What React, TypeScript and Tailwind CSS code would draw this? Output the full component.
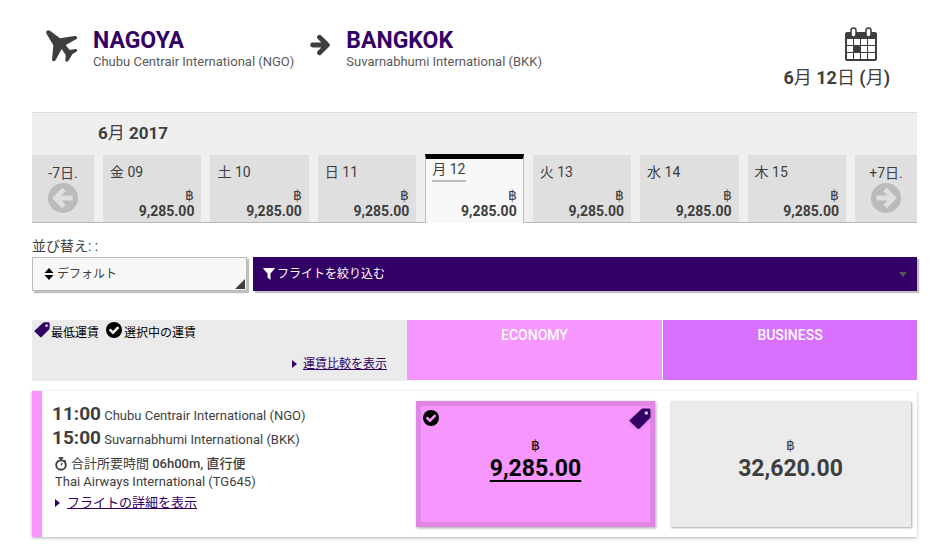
import React, { useState } from 'react';

interface Day {
  weekday: string;
  date: string;
  price: string;
}

const DAYS: Day[] = [
  { weekday: '金', date: '09', price: '9,285.00' },
  { weekday: '土', date: '10', price: '9,285.00' },
  { weekday: '日', date: '11', price: '9,285.00' },
  { weekday: '月', date: '12', price: '9,285.00' },
  { weekday: '火', date: '13', price: '9,285.00' },
  { weekday: '水', date: '14', price: '9,285.00' },
  { weekday: '木', date: '15', price: '9,285.00' },
];

function PlaneIcon() {
  return (
    <svg viewBox="48 44 96 96" className="h-8 w-8 shrink-0" fill="#3e3e3e" aria-hidden="true">
      <path d="M50 47Q54 42 61 47L90 69L134 62Q143 61 141 70L107 89L119 104L136 101Q143 101 141 108L127 117L115 137Q109 142 106 137L107 119L95 101L77 134Q71 141 66 135L70 90L50 56Q47 51 50 47Z" />
    </svg>
  );
}

function ArrowIcon() {
  return (
    <svg viewBox="0 0 20 22" className="h-[22px] w-5 shrink-0" fill="none" stroke="#3e3e3e" strokeWidth="4.8" aria-hidden="true">
      <path d="M2.6 11H16M9.5 3.2L17.3 11L9.5 18.8" strokeLinecap="round" strokeLinejoin="round" />
    </svg>
  );
}

function CalendarIcon() {
  return (
    <svg viewBox="0 0 32 34" className="h-[34px] w-8" aria-hidden="true">
      <rect x="0" y="5" width="32" height="29" rx="2" fill="#3e3e3e" />
      <rect x="2" y="12" width="28" height="20" fill="#fff" />
      <path d="M8.5 12V32M15.5 12V32M22.5 12V32M2 18.5H30M2 25.5H30" stroke="#3e3e3e" strokeWidth="1" />
      <rect x="8.5" y="18.5" width="7" height="7" fill="#3e3e3e" />
      <rect x="6" y="1" width="5" height="9" rx="2.5" fill="#fff" stroke="#3e3e3e" strokeWidth="1.5" />
      <rect x="21" y="1" width="5" height="9" rx="2.5" fill="#fff" stroke="#3e3e3e" strokeWidth="1.5" />
    </svg>
  );
}

function CircleArrowIcon({ left }: { left?: boolean }) {
  return (
    <svg viewBox="0 0 30 30" className="h-[30px] w-[30px]" aria-hidden="true">
      <circle cx="15" cy="15" r="15" fill="#bbb" />
      <g transform={left ? 'rotate(180 15 15)' : undefined}>
        <path d="M5.5 15H22M14 6.5L22.5 15L14 23.5" fill="none" stroke="#dfdfdf" strokeWidth="4.8" />
      </g>
    </svg>
  );
}

function TagIcon({ className }: { className?: string }) {
  return (
    <svg viewBox="0 0 22 22" className={className} aria-hidden="true">
      <path d="M12.5 1Q13 0.5 14 0.5H20Q21.5 0.5 21.5 2V8.5Q21.5 9.5 21 10L10.5 20.6Q9.5 21.5 8.5 20.6L1 13.5Q0 12.5 1 11.7Z" fill="#330066" />
      <circle cx="17.3" cy="5" r="1.8" fill="#dcc8ea" />
    </svg>
  );
}

function CheckIcon({ mark }: { mark: string }) {
  return (
    <svg viewBox="0 0 16 16" className="h-4 w-4 shrink-0" aria-hidden="true">
      <circle cx="8" cy="8" r="8" fill="#000" />
      <path d="M3.6 7.3L7 10.7L12.5 5.2" fill="none" stroke={mark} strokeWidth="2.6" />
    </svg>
  );
}

function StopwatchIcon() {
  return (
    <svg viewBox="0 0 12 14" className="h-[14px] w-3 shrink-0" fill="none" stroke="#3e3e3e" aria-hidden="true">
      <circle cx="6" cy="8" r="4.8" strokeWidth="1.9" />
      <path d="M3.8 0.9H8.2M6 1V3M9.6 3.2L10.8 4.4" strokeWidth="1.6" />
      <path d="M6 8.5L7.2 5.8" strokeWidth="1.2" />
    </svg>
  );
}

function Caret() {
  return (
    <svg viewBox="0 0 5 8" className="h-2 w-[5px] shrink-0" fill="#330066" aria-hidden="true">
      <path d="M0 0L5 4L0 8Z" />
    </svg>
  );
}

function City({ name, airport }: { name: string; airport: string }) {
  return (
    <div>
      <h2 className="text-[23px] leading-7 font-bold text-[#330066]">{name}</h2>
      <p className="text-[13px] leading-[14px] text-[#5a5a5a]">{airport}</p>
    </div>
  );
}

function RouteHeader() {
  return (
    <header className="flex items-start justify-between pl-[14px] pr-[27px]">
      <div className="flex items-start">
        <div className="mt-[3px] mr-[15px]">
          <PlaneIcon />
        </div>
        <City name="NAGOYA" airport="Chubu Centrair International (NGO)" />
        <div className="mx-4 mt-[7px]">
          <ArrowIcon />
        </div>
        <City name="BANGKOK" airport="Suvarnabhumi International (BKK)" />
      </div>
      <div className="flex flex-col items-end">
        <div className="mr-[13px]">
          <CalendarIcon />
        </div>
        <p className="mt-[5px] text-[18px] leading-6 font-bold">
          6<span className="font-normal">月</span> 12<span className="font-normal">日</span> (<span className="font-normal">月</span>)
        </p>
      </div>
    </header>
  );
}

function Baht() {
  return <span className="font-['Liberation_Sans',sans-serif] text-[14px] leading-4">฿</span>;
}

function WeekButton({ label, left }: { label: string; left?: boolean }) {
  return (
    <button className="flex w-[62px] shrink-0 flex-col items-center justify-start bg-[#dfdfdf] pt-2 text-[14px] leading-5">
      {label}
      <CircleArrowIcon left={left} />
    </button>
  );
}

function DayButton({ day, selected, onSelect }: { day: Day; selected: boolean; onSelect: () => void }) {
  return (
    <button
      onClick={onSelect}
      aria-pressed={selected}
      className={
        selected
          ? '-mt-px -mb-px flex flex-1 flex-col border-x border-t-[5px] border-x-[#bbb] border-t-black bg-[#f8f8f8] px-[6px] pb-1 text-[14px]'
          : 'flex flex-1 flex-col bg-[#dfdfdf] px-[7px] pt-2 pb-[3px] text-[14px]'
      }
    >
      <span className={selected ? 'self-start border-b-2 border-[#bbb] leading-[21px]' : 'self-start leading-[18px]'}>
        {day.weekday} {day.date}
      </span>
      <span className="mt-auto flex flex-col self-end text-right leading-4">
        <Baht />
        <span className="font-bold">{day.price}</span>
      </span>
    </button>
  );
}

function Calendar() {
  const [selected, setSelected] = useState('12');
  return (
    <section className="mt-[22px] border-t border-[#ddd] bg-[#efefef]">
      <h3 className="pb-[2px] pl-[66px] text-[17px] leading-10 font-bold">
        6<span className="font-normal">月</span> 2017
      </h3>
      <div className="flex h-[68px] gap-[9px] border-b border-[#b9b9b9]">
        <WeekButton label="-7日." left />
        {DAYS.map(day => (
          <DayButton
            key={day.date}
            day={day}
            selected={day.date === selected}
            onSelect={() => setSelected(day.date)}
          />
        ))}
        <WeekButton label="+7日." />
      </div>
    </section>
  );
}

function Toolbar() {
  return (
    <section className="mt-[13px]">
      <label htmlFor="sort" className="block pb-px text-[14px] leading-5">
        並び替え: :
      </label>
      <div className="flex gap-[6px]">
        <div className="relative w-[215px] shrink-0">
          <select
            id="sort"
            className="h-[34px] w-full appearance-none border border-[#bbb] bg-[#f8f8f8] pl-6 text-[12px] shadow-[2px_2px_1px_#c0c0c0]"
          >
            <option>デフォルト</option>
          </select>
          <svg viewBox="0 0 10 12" className="pointer-events-none absolute top-[11px] left-3 h-3 w-[10px]" aria-hidden="true">
            <path d="M5 0L9.5 5H0.5ZM0.5 7H9.5L5 12Z" fill="#000" />
          </svg>
          <svg viewBox="0 0 10 10" className="pointer-events-none absolute right-[2px] bottom-[2px] h-[10px] w-[10px]" aria-hidden="true">
            <path d="M10 0V10H0Z" fill="#3e3e3e" />
          </svg>
        </div>
        <button className="flex h-[34px] flex-1 items-center bg-[#330066] pr-[10px] pl-[10px] text-[12px] text-white shadow-[2px_2px_1px_#c0c0c0]">
          <svg viewBox="0 0 12 12" className="mr-[2px] h-3 w-3" aria-hidden="true">
            <path d="M0.5 0H11.5Q12 0.5 11.5 1L7.5 5.5V12L4.5 9.5V5.5L0.5 1Q0 0.5 0.5 0Z" fill="#fff" />
          </svg>
          フライトを絞り込む
          <svg viewBox="0 0 8 5" className="ml-auto h-[5px] w-2" aria-hidden="true">
            <path d="M0 0H8L4 5Z" fill="#5a555a" />
          </svg>
        </button>
      </div>
    </section>
  );
}

function FareHeader() {
  return (
    <div className="mt-[29px] grid grid-cols-[375fr_255fr_255fr] text-[12px]">
      <div className="flex h-[61px] flex-col justify-between bg-[#ebebeb] pr-5 pb-[9px] pl-[2px] text-black">
        <div className="flex items-start">
          <TagIcon className="mt-[2px] h-4 w-4" />
          <span className="mt-1 ml-[1px] leading-[18px]">最低運賃</span>
          <span className="mt-[2px] ml-[7px]">
            <CheckIcon mark="#ebebeb" />
          </span>
          <span className="mt-1 ml-[2px] leading-[18px]">選択中の運賃</span>
        </div>
        <a href="#compare" className="flex items-center gap-[6px] self-end text-[#330066]">
          <Caret />
          <span className="leading-4 underline">運賃比較を表示</span>
        </a>
      </div>
      <div className="h-[60px] bg-[#f896ff] pt-[5px] text-center text-[14px] leading-5 font-medium text-white">ECONOMY</div>
      <div className="ml-px h-[60px] bg-[#d970ff] pt-[5px] text-center text-[14px] leading-5 font-medium text-white">BUSINESS</div>
    </div>
  );
}

function Leg({ time, airport }: { time: string; airport: string }) {
  return (
    <p className="text-[13px] leading-6">
      <span className="text-[19px] leading-none font-bold">{time}</span> {airport}
    </p>
  );
}

function FlightRow() {
  return (
    <article className="mt-[10px] grid grid-cols-[375fr_255fr_255fr] bg-white shadow-[0_1px_3px_rgba(0,0,0,0.3)]">
      <div className="border-l-[10px] border-[#f896ff] pt-[13px] pb-6 pl-[10px]">
        <Leg time="11:00" airport="Chubu Centrair International (NGO)" />
        <Leg time="15:00" airport="Suvarnabhumi International (BKK)" />
        <div className="pl-[3px] text-[13px]">
          <p className="mt-[3px] flex items-center gap-1 leading-[18px]">
            <StopwatchIcon />
            <span>
              合計所要時間 <span className="font-medium">06h00m, 直行便</span>
            </span>
          </p>
          <p className="leading-[18px]">Thai Airways International (TG645)</p>
          <a href="#details" className="mt-[2px] flex items-center gap-[7px] leading-5 text-[#330066]">
            <Caret />
            <span className="underline">フライトの詳細を表示</span>
          </a>
        </div>
      </div>
      <button className="relative mt-[10px] mr-[7px] mb-[10px] ml-[9px] flex flex-col items-center justify-start border-[5px] border-[#e086e6] bg-[#f896ff] pt-[31px] text-black shadow-[1px_1px_3px_rgba(0,0,0,0.35)]">
        <span className="absolute top-1 left-[2px]">
          <CheckIcon mark="#f896ff" />
        </span>
        <TagIcon className="absolute top-[2px] -right-px h-[22px] w-[22px] drop-shadow" />
        <Baht />
        <span className="text-[23px] leading-8 font-bold underline decoration-2 underline-offset-4">9,285.00</span>
      </button>
      <button className="mt-[10px] mr-[6px] mb-[10px] ml-2 flex flex-col items-center justify-start bg-[#ebebeb] pt-9 shadow-[1px_1px_2px_rgba(0,0,0,0.35)]">
        <Baht />
        <span className="text-[23px] leading-8 font-bold">32,620.00</span>
      </button>
    </article>
  );
}

export default function App() {
  return (
    <main className="bg-white pt-[27px] pr-4 pb-4 pl-8 font-['Roboto','Noto_Sans_CJK_JP',sans-serif] text-[#3e3e3e]">
      <RouteHeader />
      <Calendar />
      <Toolbar />
      <FareHeader />
      <FlightRow />
    </main>
  );
}
